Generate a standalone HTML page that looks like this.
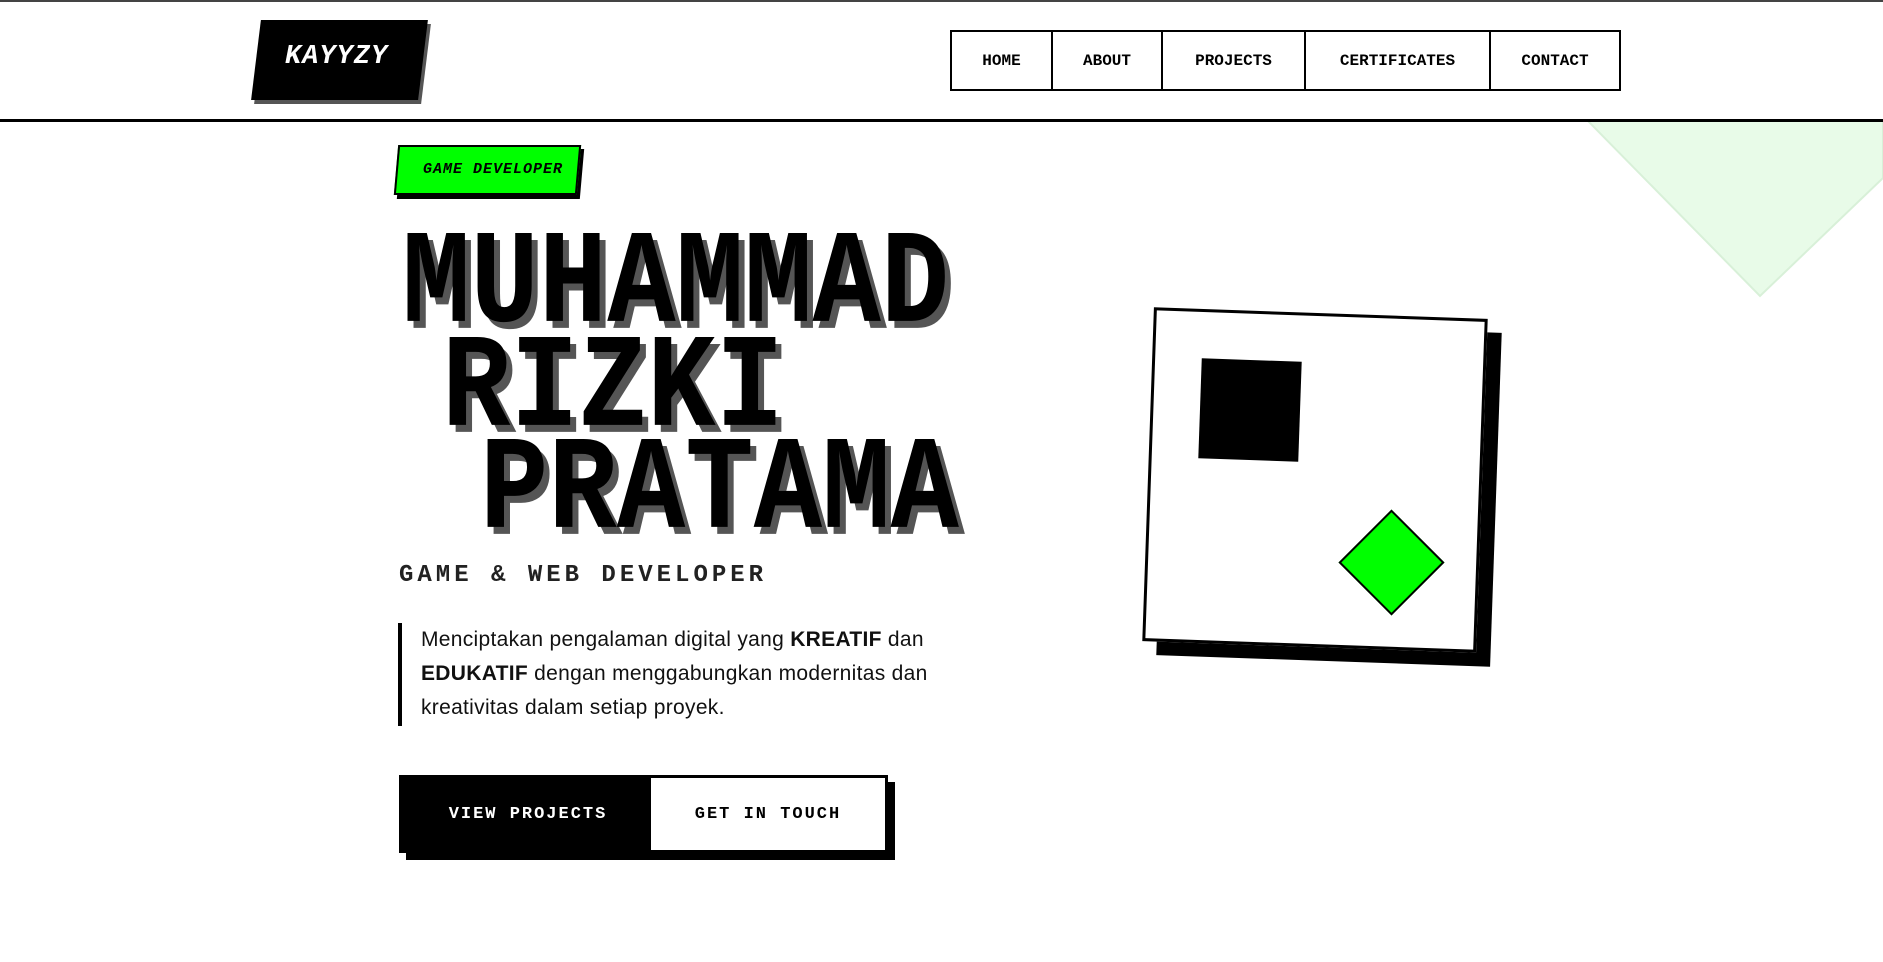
<!DOCTYPE html>
<html><head><meta charset="utf-8"><style>
*{margin:0;padding:0;box-sizing:border-box}
body{width:1883px;height:962px;background:#fff;position:relative;overflow:hidden;font-family:"Liberation Sans",sans-serif}
.abs{position:absolute}
.mono{font-family:"Liberation Mono",monospace;font-weight:bold}
.nm{position:absolute;font-family:"Liberation Mono",monospace;font-weight:bold;font-size:114px;line-height:114px;white-space:pre;text-shadow:6px 6px 0 #555;transform:scaleY(1.17);transform-origin:0 87px}
</style></head><body>
<div class="abs" style="left:0;top:0;width:1883px;height:2px;background:#444"></div>
<svg class="abs" style="left:0;top:0" width="1883" height="962">
<polygon points="1588,121 1883,121 1883,178 1760,296" fill="#e8fbe8" stroke="#d8f0d8" stroke-width="2"/>
</svg>
<div class="abs" style="left:0;top:119px;width:1883px;height:3px;background:#000"></div>
<div class="abs" style="left:259px;top:24px;width:167px;height:80px;background:#555;transform:skewX(-7deg)"></div>
<div class="abs" style="left:256px;top:20px;width:167px;height:80px;background:#000;transform:skewX(-7deg)"></div>
<div class="abs mono" style="left:285px;top:42px;color:#fff;font-size:27px;font-style:italic;letter-spacing:1px">KAYYZY</div>
<div class="abs mono" style="left:950px;top:30px;width:671px;height:61px;border:2px solid #000;display:flex;font-size:16px">
<div style="width:101px;display:flex;align-items:center;justify-content:center;border-right:2px solid #000">HOME</div>
<div style="width:110px;display:flex;align-items:center;justify-content:center;border-right:2px solid #000">ABOUT</div>
<div style="width:143px;display:flex;align-items:center;justify-content:center;border-right:2px solid #000">PROJECTS</div>
<div style="width:185px;display:flex;align-items:center;justify-content:center;border-right:2px solid #000">CERTIFICATES</div>
<div style="flex:1;display:flex;align-items:center;justify-content:center">CONTACT</div>
</div>
<div class="abs" style="left:399px;top:149px;width:183px;height:50px;background:#000;transform:skewX(-5deg)"></div>
<div class="abs" style="left:396px;top:145px;width:183px;height:50px;background:#00ff00;border:2px solid #000;transform:skewX(-5deg)"></div>
<div class="abs mono" style="left:423px;top:161px;font-size:15px;font-style:italic;letter-spacing:1px">GAME DEVELOPER</div>
<div class="nm" style="left:402px;top:235px">MUHAMMAD</div>
<div class="nm" style="left:442px;top:339px">RIZKI</div>
<div class="nm" style="left:480px;top:441px">PRATAMA</div>
<div class="abs mono" style="left:399px;top:562px;font-size:24px;letter-spacing:4px;color:#222">GAME &amp; WEB DEVELOPER</div>
<div class="abs" style="left:398px;top:623px;width:4px;height:103px;background:#000"></div>
<div class="abs" style="left:421px;top:623px;width:560px;font-size:21px;letter-spacing:0.3px;line-height:34px;color:#111">Menciptakan pengalaman digital yang <b>KREATIF</b> dan <b>EDUKATIF</b> dengan menggabungkan modernitas dan kreativitas dalam setiap proyek.</div>
<div class="abs" style="left:406px;top:782px;width:489px;height:78px;background:#000"></div>
<div class="abs mono" style="left:399px;top:775px;width:258px;height:78px;background:#000;color:#fff;font-size:17px;letter-spacing:2px;display:flex;align-items:center;justify-content:center">VIEW PROJECTS</div>
<div class="abs mono" style="left:648px;top:775px;width:240px;height:78px;background:#fff;border:3px solid #000;font-size:17px;letter-spacing:2px;display:flex;align-items:center;justify-content:center">GET IN TOUCH</div>
<div class="abs" style="left:1162px;top:327px;width:334px;height:334px;background:#000;transform:rotate(2deg)"></div>
<div class="abs" style="left:1148px;top:313px;width:334px;height:334px;background:#fff;border:3px solid #000;transform:rotate(2deg)"></div>
<div class="abs" style="left:1200px;top:360px;width:100px;height:100px;background:#000;transform:rotate(2deg)"></div>
<div class="abs" style="left:1354px;top:525px;width:75px;height:75px;background:#00ff00;border:2px solid #000;transform:rotate(45deg)"></div>
</body></html>
